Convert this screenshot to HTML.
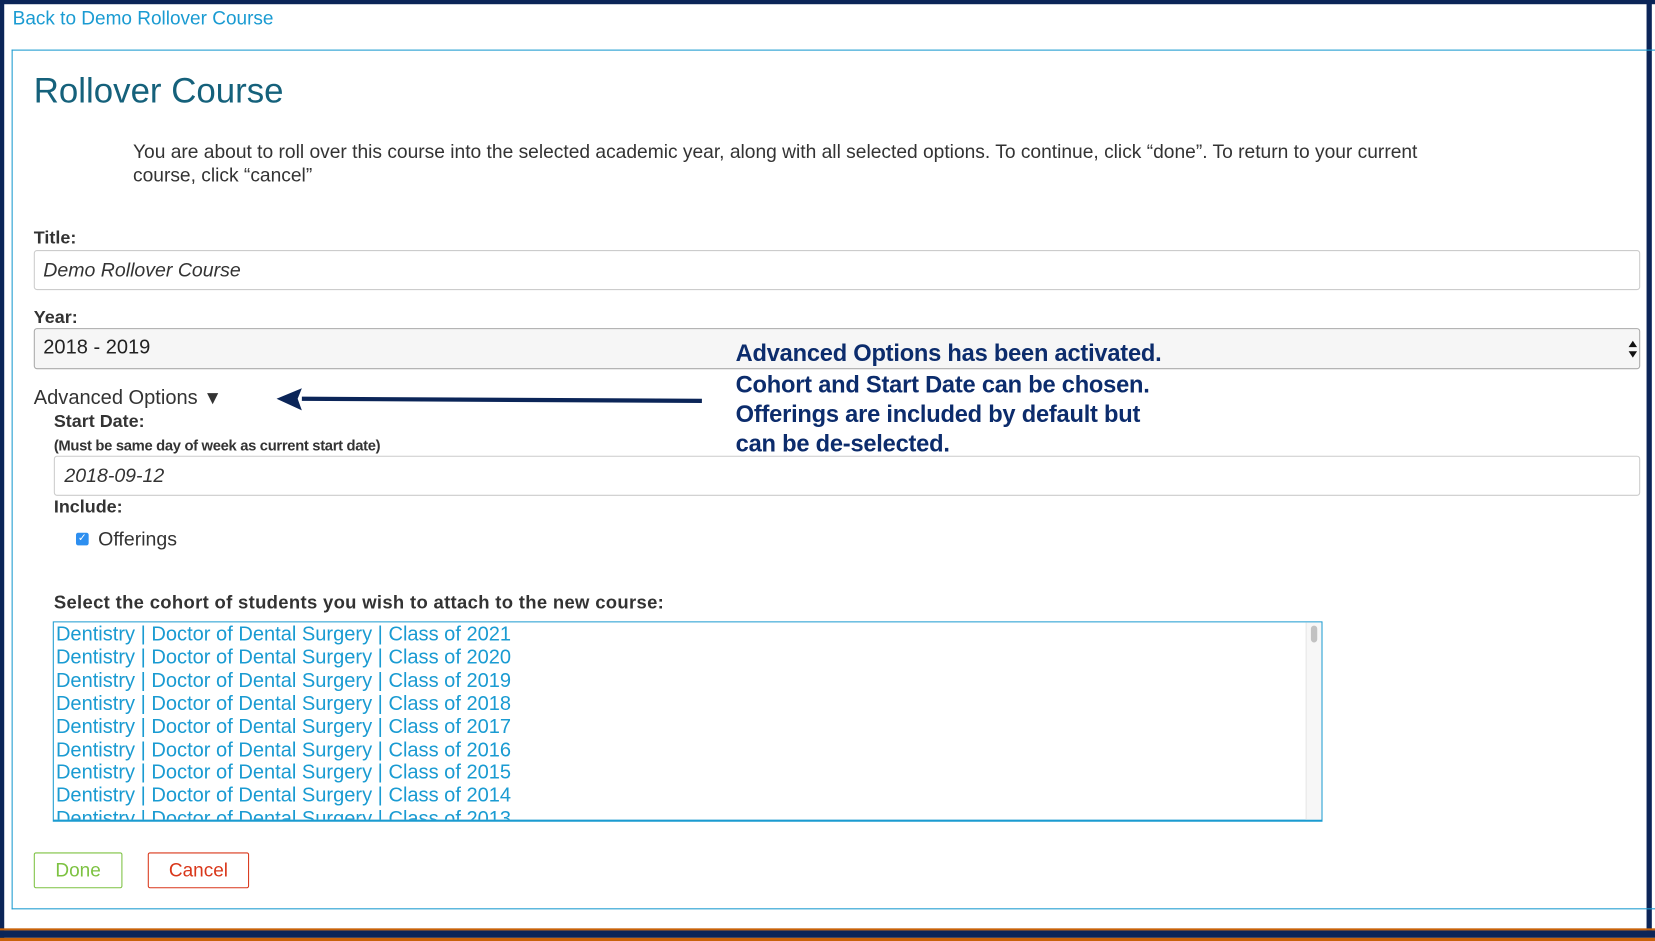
<!DOCTYPE html>
<html><head><meta charset="utf-8"><style>
html,body{margin:0;padding:0;background:#fff;overflow:hidden}
body{width:1655px;height:941px;position:relative}
#w{position:absolute;left:0;top:0;width:1568px;height:892px;transform:scale(1.05548,1.05493);transform-origin:0 0;font-family:"Liberation Sans",sans-serif;color:#333}
.a{position:absolute;white-space:nowrap}
.b{font-weight:bold;font-size:17px;color:#333}
.inp{position:absolute;border:1px solid #ccc;border-radius:3px;background:#fff;box-sizing:border-box}
.it{font-style:italic;font-size:18.5px;color:#333}
.note{position:absolute;left:697px;font:bold 22.4px "Liberation Sans",sans-serif;color:#0c2c6c;white-space:nowrap;letter-spacing:-0.2px}
.li{position:absolute;left:2px;font-size:19px;color:#1a9bd2;white-space:nowrap}
</style></head><body><div id="w">
<div class="a" style="left:0;top:0;width:1568px;height:4px;background:#0b2558"></div>
<div class="a" style="left:0;top:0;width:4px;height:892px;background:#0b2558"></div>
<div class="a" style="left:1560px;top:0;width:5px;height:885px;background:#0b2558"></div>
<div class="a" style="left:0;top:880px;width:1568px;height:2px;background:#c8620a"></div>
<div class="a" style="left:0;top:882px;width:1568px;height:7px;background:#0b2558"></div>
<div class="a" style="left:0;top:889px;width:1568px;height:3px;background:#c8620a"></div>

<div class="a" style="left:12px;top:7px;font-size:18px;color:#1a9bd2">Back to Demo Rollover Course</div>
<div class="a" style="left:11px;top:47px;width:1560px;height:815px;border:1px solid #1b9bd0;border-right:none;box-sizing:border-box"></div>

<div class="a" style="left:32px;top:67px;font-size:33px;color:#15617b">Rollover Course</div>
<div class="a" style="left:126px;top:133px;font-size:18.2px;line-height:22px;white-space:normal;width:1235px;color:#333">You are about to roll over this course into the selected academic year, along with all selected options. To continue, click “done”. To return to your current course, click “cancel”</div>

<div class="a b" style="left:32px;top:216px">Title:</div>
<div class="inp" style="left:32px;top:237px;width:1522px;height:38px"></div>
<div class="a it" style="left:41px;top:245px">Demo Rollover Course</div>

<div class="a b" style="left:32px;top:291px">Year:</div>
<div class="inp" style="left:32px;top:311px;width:1522px;height:39px;background:#f6f6f6;border-color:#aaa"></div>
<div class="a" style="left:41px;top:319px;font-size:19px;color:#222">2018 - 2019</div>
<svg class="a" style="left:1542px;top:322px" width="10" height="18"><path d="M1 7L5 1L9 7Z M1 11L5 17L9 11Z" fill="#111"/></svg>

<div class="a" style="left:32px;top:367px;font-size:19px;color:#333">Advanced Options <span style="font-size:18px">▼</span></div>
<svg class="a" style="left:258px;top:366px" width="410" height="26"><path d="M407 14L28 12" stroke="#0b2558" stroke-width="4"/><path d="M4 12L28 2L24 12L28 23Z" fill="#0b2558"/></svg>
<div class="note" style="top:322px">Advanced Options has been activated.</div>
<div class="note" style="top:352px">Cohort and Start Date can be chosen.</div>
<div class="note" style="top:380px">Offerings are included by default but</div>
<div class="note" style="top:408px">can be de-selected.</div>

<div class="a b" style="left:51px;top:390px">Start Date:</div>
<div class="a" style="left:51px;top:414px;font-size:14px;font-weight:bold;color:#333;letter-spacing:-0.3px">(Must be same day of week as current start date)</div>
<div class="inp" style="left:51px;top:432px;width:1503px;height:38px"></div>
<div class="a it" style="left:61px;top:440px">2018-09-12</div>

<div class="a b" style="left:51px;top:471px">Include:</div>
<div class="a" style="left:72px;top:505px;width:12px;height:12px;border-radius:2px;background:#2d8ff0;color:#fff;font-size:10px;line-height:12px;text-align:center">✓</div>
<div class="a" style="left:93px;top:500px;font-size:18.5px;color:#333">Offerings</div>

<div class="a b" style="left:51px;top:561px;font-size:17.5px;letter-spacing:0.3px">Select the cohort of students you wish to attach to the new course:</div>
<div class="a" style="left:50px;top:589px;width:1203px;height:190px;border:1px solid #1b9bd0;border-bottom-width:2px;box-sizing:border-box;overflow:hidden">
<div class="a" style="right:0;top:0;width:14px;height:190px;background:#f7f7f7;border-left:1px solid #e6e6e6"></div>
<div class="a" style="right:4px;top:3px;width:6px;height:16px;background:#c2c2c2;border-radius:3px"></div>
<div class="li" style="top:1px">Dentistry | Doctor of Dental Surgery | Class of 2021</div>
<div class="li" style="top:23px">Dentistry | Doctor of Dental Surgery | Class of 2020</div>
<div class="li" style="top:45px">Dentistry | Doctor of Dental Surgery | Class of 2019</div>
<div class="li" style="top:67px">Dentistry | Doctor of Dental Surgery | Class of 2018</div>
<div class="li" style="top:89px">Dentistry | Doctor of Dental Surgery | Class of 2017</div>
<div class="li" style="top:111px">Dentistry | Doctor of Dental Surgery | Class of 2016</div>
<div class="li" style="top:132px">Dentistry | Doctor of Dental Surgery | Class of 2015</div>
<div class="li" style="top:154px">Dentistry | Doctor of Dental Surgery | Class of 2014</div>
<div class="li" style="top:176px">Dentistry | Doctor of Dental Surgery | Class of 2013</div>
</div>

<div class="a" style="left:32px;top:808px;width:84px;height:34px;border:1px solid #7dc242;border-radius:2px;box-sizing:border-box;color:#7dc242;font-size:18px;line-height:33px;text-align:center">Done</div>
<div class="a" style="left:140px;top:808px;width:96px;height:34px;border:1px solid #d9371a;border-radius:2px;box-sizing:border-box;color:#d9371a;font-size:18px;line-height:33px;text-align:center">Cancel</div>
</div></body></html>
